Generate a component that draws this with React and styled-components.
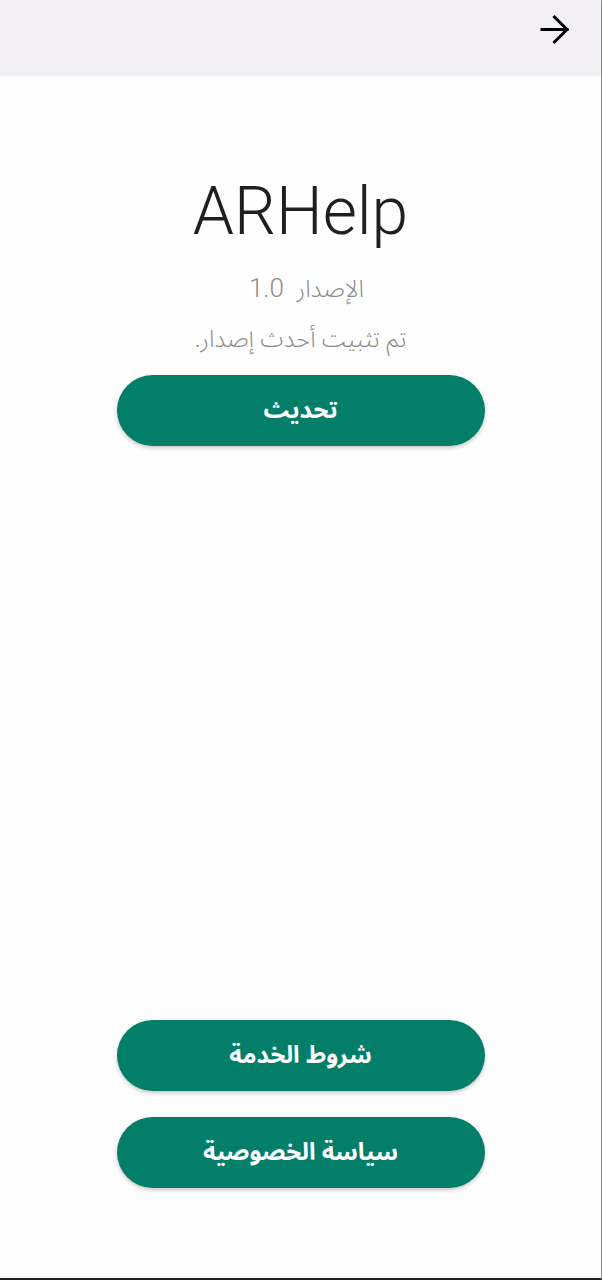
import React from "react";
import styled, { createGlobalStyle } from "styled-components";

const Global = createGlobalStyle`
  html, body { margin: 0; padding: 0; background: #fefefe; }
  #root { min-height: 1280px; }
`;

const Screen = styled.div`
  box-sizing: border-box;
  height: 1280px;
  display: flex;
  flex-direction: column;
  background: #fefefe;
  border-right: 1px solid #8a8a8a;
  border-bottom: 2px solid #222;
  direction: rtl;
`;

const TopBar = styled.header`
  height: 74px;
  flex: none;
  background: #f2f0f4;
  display: flex;
  align-items: center;
  padding-right: 30px;
  box-shadow: 0 1px 3px rgba(0, 0, 0, 0.1);
  position: relative;
  z-index: 1;
`;

const BackButton = styled.button`
  border: none;
  background: transparent;
  padding: 0;
  width: 32px;
  height: 32px;
  display: flex;
  align-items: center;
  justify-content: center;
  margin-top: -16px;
`;

const Body = styled.main`
  flex: 1;
  display: flex;
  flex-direction: column;
  align-items: center;
  padding-top: 100px;
  padding-bottom: 90px;
`;

const Title = styled.h1`
  margin: 0;
  font-family: Roboto, "Liberation Sans", sans-serif;
  font-weight: 300;
  font-size: 66px;
  line-height: 76px;
  color: #1f1f1f;
  direction: ltr;
`;

const Info = styled.p`
  margin: ${(p) => p.$top}px 0 0;
  padding-left: ${(p) => p.$endPad || 0}px;
  font-family: "Noto Sans Arabic", "DejaVu Sans", sans-serif;
  font-weight: 300;
  font-size: 24px;
  line-height: 40px;
  color: #8c8c8c;
  white-space: pre;
`;

const Version = styled.span`
  font-family: Roboto, "Liberation Sans", sans-serif;
  font-weight: 300;
  font-size: 26px;
`;

const Pill = styled.button`
  width: 368px;
  height: 71px;
  border: none;
  border-radius: 36px;
  background: #037f69;
  color: #fff;
  font-family: "Noto Sans Arabic", "DejaVu Sans", sans-serif;
  font-weight: 700;
  font-size: 24px;
  box-shadow: 0 2px 4px rgba(0, 0, 0, 0.22);
  margin-top: ${(p) => p.$top || 0}px;
  flex: none;
`;

const Spacer = styled.div`
  flex: 1;
`;

function Arrow() {
  return (
    <svg width="32" height="32" viewBox="0 0 32 32" fill="none" stroke="#000" strokeWidth="3" strokeLinecap="square">
      <path d="M3 16.5h25" />
      <path d="M15.5 4l12.5 12.5L15.5 29" strokeLinejoin="miter" />
    </svg>
  );
}

export default function App() {
  return (
    <>
      <Global />
      <Screen>
        <TopBar>
          <BackButton aria-label="back">
            <Arrow />
          </BackButton>
        </TopBar>
        <Body>
          <Title>ARHelp</Title>
          <Info $top={18} $endPad={12}>
            الإصدار{"  "}
            <Version>1.0</Version>
          </Info>
          <Info $top={10}>تم تثبيت أحدث إصدار.</Info>
          <Pill $top={15}>تحديث</Pill>
          <Spacer />
          <Pill>شروط الخدمة</Pill>
          <Pill $top={26}>سياسة الخصوصية</Pill>
        </Body>
      </Screen>
    </>
  );
}
